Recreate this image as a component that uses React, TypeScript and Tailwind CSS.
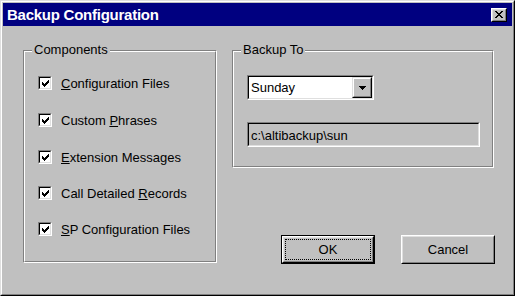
import React from "react";

const Pix = ({ rows }: { rows: string[] }) => (
  <svg
    width={rows[0].length}
    height={rows.length}
    shapeRendering="crispEdges"
    className="block"
  >
    {rows.flatMap((r, y) =>
      r
        .split("")
        .map((c, x) =>
          c === "X" ? (
            <rect key={`${x}-${y}`} x={x} y={y} width={1} height={1} fill="#000" />
          ) : null
        )
    )}
  </svg>
);

const CHECK = ["......X", ".....XX", "X...XXX", "XX.XXX.", "XXXXX..", ".XXX...", "..X...."];
const CLOSE = ["XX....XX", ".XX..XX.", "..XXXX..", "...XX...", "..XXXX..", ".XX..XX.", "XX....XX"];
const ARROW = ["XXXXXXX", ".XXXXX.", "..XXX..", "...X..."];

function GroupBox({
  label,
  className,
  children,
}: {
  label: string;
  className: string;
  children?: React.ReactNode;
}) {
  return (
    <div
      className={`relative border border-t-[#808080] border-l-[#808080] border-r-white border-b-white ${className}`}
    >
      <div className="h-full border border-t-white border-l-white border-r-[#808080] border-b-[#808080]">
        {children}
      </div>
      <span className="absolute -top-[9px] left-[8px] bg-[#c0c0c0] px-[2px] leading-[15px] whitespace-nowrap">
        {label}
      </span>
    </div>
  );
}

function CheckRow({ className, children }: { className?: string; children: React.ReactNode }) {
  return (
    <div className={`flex items-start h-[15px] ${className ?? ""}`}>
      <div className="w-[14px] h-[14px] shrink-0 border border-t-[#808080] border-l-[#808080] border-r-white border-b-white">
        <div className="w-full h-full bg-white border border-t-black border-l-black border-r-[#dfdfdf] border-b-[#dfdfdf] pl-[2px] pt-[2px]">
          <Pix rows={CHECK} />
        </div>
      </div>
      <span className="ml-[9px] leading-[15px] whitespace-nowrap">{children}</span>
    </div>
  );
}

export default function App() {
  return (
    <div className="w-[515px] h-[296px] bg-[#c0c0c0] font-['Liberation_Sans',Arial,sans-serif] text-[13px] leading-[15px] text-black">
      <div className="h-full border border-t-[#dfdfdf] border-l-[#dfdfdf] border-r-black border-b-black">
        <div className="h-full border border-t-white border-l-white border-r-[#808080] border-b-[#808080] p-px flex flex-col">
          {/* Title bar */}
          <div className="h-[23px] shrink-0 bg-[#000080] flex items-center justify-between pl-[4px] pr-[5px]">
            <span className="text-white font-bold text-[15px] tracking-[-0.25px] leading-[23px] whitespace-nowrap">
              Backup Configuration
            </span>
            <div className="w-[16px] h-[14px] border border-t-white border-l-white border-r-black border-b-black">
              <div className="w-full h-full bg-[#c0c0c0] border border-t-[#dfdfdf] border-l-[#dfdfdf] border-r-[#808080] border-b-[#808080] pl-[2px] pt-[1px]">
                <Pix rows={CLOSE} />
              </div>
            </div>
          </div>

          {/* Body */}
          <div className="flex-1 flex items-start pl-[20px] pt-[24px] gap-[15px]">
            <GroupBox label="Components" className="w-[194px] h-[213px] shrink-0">
              <div className="flex flex-col pl-[13px] pt-[24px]">
                <CheckRow>
                  <span className="underline">C</span>onfiguration Files
                </CheckRow>
                <CheckRow className="mt-[22px]">
                  Custom <span className="underline">P</span>hrases
                </CheckRow>
                <CheckRow className="mt-[22px]">
                  <span className="underline">E</span>xtension Messages
                </CheckRow>
                <CheckRow className="mt-[21px]">
                  Call Detailed <span className="underline">R</span>ecords
                </CheckRow>
                <CheckRow className="mt-[21px]">
                  <span className="underline">S</span>P Configuration Files
                </CheckRow>
              </div>
            </GroupBox>

            <div className="w-[263px] flex flex-col">
              <GroupBox label="Backup To" className="w-[262px] h-[118px]">
                <div className="flex flex-col pl-[13px] pt-[23px]">
                  {/* Combo box */}
                  <div className="w-[127px] h-[25px] border border-t-[#808080] border-l-[#808080] border-r-white border-b-white">
                    <div className="h-full bg-white border border-t-black border-l-black border-r-[#dfdfdf] border-b-[#dfdfdf] flex items-stretch">
                      <div className="flex-1 flex items-center pl-[2px]">Sunday</div>
                      <div className="w-[20px] border border-t-[#dfdfdf] border-l-[#dfdfdf] border-r-black border-b-black">
                        <div className="w-full h-full bg-[#c0c0c0] border border-t-white border-l-white border-r-[#808080] border-b-[#808080] flex items-center justify-center">
                          <Pix rows={ARROW} />
                        </div>
                      </div>
                    </div>
                  </div>
                  {/* Path field */}
                  <div className="mt-[22px] w-[233px] h-[25px] border border-t-[#808080] border-l-[#808080] border-r-white border-b-white">
                    <div className="h-full bg-[#c0c0c0] border border-t-black border-l-black border-r-[#dfdfdf] border-b-[#dfdfdf] flex items-center pl-[2px] pt-[2px]">
                      c:\altibackup\sun
                    </div>
                  </div>
                </div>
              </GroupBox>

              <div className="mt-[67px] flex justify-end gap-[26px]">
                <div className="w-[94px] h-[29px] border border-black">
                  <div className="h-full border border-t-white border-l-white border-r-black border-b-black">
                    <div className="h-full border border-t-[#dfdfdf] border-l-[#dfdfdf] border-r-[#808080] border-b-[#808080] p-px">
                      <div className="h-full border border-dotted border-black flex items-center justify-center">
                        OK
                      </div>
                    </div>
                  </div>
                </div>
                <div className="w-[94px] h-[29px] border border-t-white border-l-white border-r-black border-b-black">
                  <div className="h-full border border-t-[#dfdfdf] border-l-[#dfdfdf] border-r-[#808080] border-b-[#808080] flex items-center justify-center">
                    Cancel
                  </div>
                </div>
              </div>
            </div>
          </div>
        </div>
      </div>
    </div>
  );
}
